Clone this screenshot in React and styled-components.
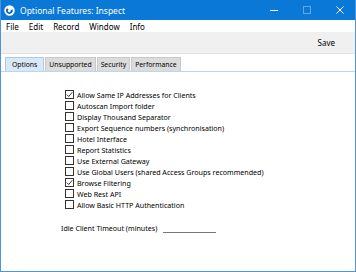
import React from "react";
import styled, { createGlobalStyle } from "styled-components";

const Global = createGlobalStyle`
  html, body { margin: 0; padding: 0; background: #fff; }
  body { font-family: "Noto Sans", "Open Sans", sans-serif; }
`;

const Window = styled.div`
  width: 356px;
  height: 272px;
  box-sizing: border-box;
  display: flex;
  flex-direction: column;
  border: 1px solid #4b95dc;
  border-top: none;
  background: #fff;
  overflow: hidden;
`;

const TitleBar = styled.div`
  height: 20px;
  margin: 0 -1px;
  background: #0a78d7;
  color: #fff;
  display: flex;
  align-items: center;
  padding-left: 4px;
  font-size: 8.5px;
  flex-shrink: 0;
`;

const TitleText = styled.span`
  margin-left: 5px;
  flex: 1;
`;

const WinButton = styled.div`
  width: 33px;
  height: 20px;
  display: flex;
  align-items: center;
  justify-content: center;
  opacity: ${(p) => (p.$disabled ? 0.35 : 1)};
`;

const MenuBar = styled.div`
  height: 12px;
  display: flex;
  align-items: center;
  padding-left: 5px;
  gap: 10px;
  font-size: 8px;
  color: #000;
  flex-shrink: 0;
`;

const Toolbar = styled.div`
  height: 21px;
  background: #f0f0f0;
  border-bottom: 1px solid #e2e2e2;
  display: flex;
  align-items: center;
  justify-content: flex-end;
  padding-right: 20px;
  font-size: 8px;
  flex-shrink: 0;
`;

const TabStrip = styled.div`
  margin-top: 3px;
  padding-left: 4px;
  display: flex;
  border-bottom: 1px solid #bcd6f0;
  height: 14px;
  flex-shrink: 0;
`;

const Tab = styled.div`
  box-sizing: border-box;
  height: 14px;
  padding: 0 ${(p) => (p.$active ? 6 : 3)}px;
  display: flex;
  align-items: center;
  font-size: 6.8px;
  color: #000;
  background: ${(p) => (p.$active ? "#d9e8f7" : "#dcdcdc")};
  border: 1px solid ${(p) => (p.$active ? "#a9cbee" : "#c9c9c9")};
  border-bottom: none;
  margin-right: 1px;
`;

const List = styled.div`
  margin-top: 17px;
  padding-left: 64px;
  display: flex;
  flex-direction: column;
`;

const Row = styled.div`
  height: 11px;
  display: flex;
  align-items: center;
  font-size: 7.1px;
  color: #000;
`;

const Box = styled.div`
  width: 9px;
  height: 9px;
  box-sizing: border-box;
  border: 1px solid #333;
  background: #fff;
  margin-right: 3px;
  display: flex;
  align-items: center;
  justify-content: center;
`;

const IdleRow = styled.div`
  margin-top: 13px;
  padding-left: 60px;
  display: flex;
  align-items: center;
  font-size: 7.1px;
  color: #000;
`;

const Field = styled.div`
  width: 53px;
  height: 8px;
  margin-left: 6px;
  border-bottom: 1px solid #777;
`;

const items = [
  ["Allow Same IP Addresses for Clients", true],
  ["Autoscan Import folder", false],
  ["Display Thousand Separator", false],
  ["Export Sequence numbers (synchronisation)", false],
  ["Hotel Interface", false],
  ["Report Statistics", false],
  ["Use External Gateway", false],
  ["Use Global Users (shared Access Groups recommended)", false],
  ["Browse Filtering", true],
  ["Web Rest API", false],
  ["Allow Basic HTTP Authentication", false],
];

const AppIcon = () => (
  <svg width="11" height="11" viewBox="0 0 11 11">
    <circle cx="5.5" cy="5.5" r="5.2" fill="#fff" />
    <path d="M3 3.2 A3.3 3.3 0 1 0 8.4 4.2 L6.6 5.2 A1.5 1.5 0 1 1 4.6 4.4 Z" fill="#0a5fa8" />
  </svg>
);

export default function App() {
  return (
    <>
      <Global />
      <Window>
        <TitleBar>
          <AppIcon />
          <TitleText>Optional Features: Inspect</TitleText>
          <WinButton>
            <svg width="8" height="8" viewBox="0 0 8 8">
              <line x1="0" y1="4.5" x2="8" y2="4.5" stroke="#fff" strokeWidth="1" />
            </svg>
          </WinButton>
          <WinButton $disabled>
            <svg width="8" height="8" viewBox="0 0 8 8">
              <rect x="0.5" y="0.5" width="7" height="7" fill="none" stroke="#fff" strokeWidth="1" />
            </svg>
          </WinButton>
          <WinButton>
            <svg width="8" height="8" viewBox="0 0 8 8">
              <path d="M0.5 0.5 L7.5 7.5 M7.5 0.5 L0.5 7.5" stroke="#fff" strokeWidth="1" />
            </svg>
          </WinButton>
        </TitleBar>
        <MenuBar>
          <span>File</span>
          <span>Edit</span>
          <span>Record</span>
          <span>Window</span>
          <span>Info</span>
        </MenuBar>
        <Toolbar>Save</Toolbar>
        <TabStrip>
          <Tab $active>Options</Tab>
          <Tab>Unsupported</Tab>
          <Tab>Security</Tab>
          <Tab>Performance</Tab>
        </TabStrip>
        <List>
          {items.map(([label, checked]) => (
            <Row key={label}>
              <Box>
                {checked && (
                  <svg width="7" height="7" viewBox="0 0 7 7">
                    <path d="M0.8 3.6 L2.7 5.5 L6.3 1.2" fill="none" stroke="#222" strokeWidth="0.9" />
                  </svg>
                )}
              </Box>
              {label}
            </Row>
          ))}
        </List>
        <IdleRow>
          Idle Client Timeout (minutes)
          <Field />
        </IdleRow>
      </Window>
    </>
  );
}
